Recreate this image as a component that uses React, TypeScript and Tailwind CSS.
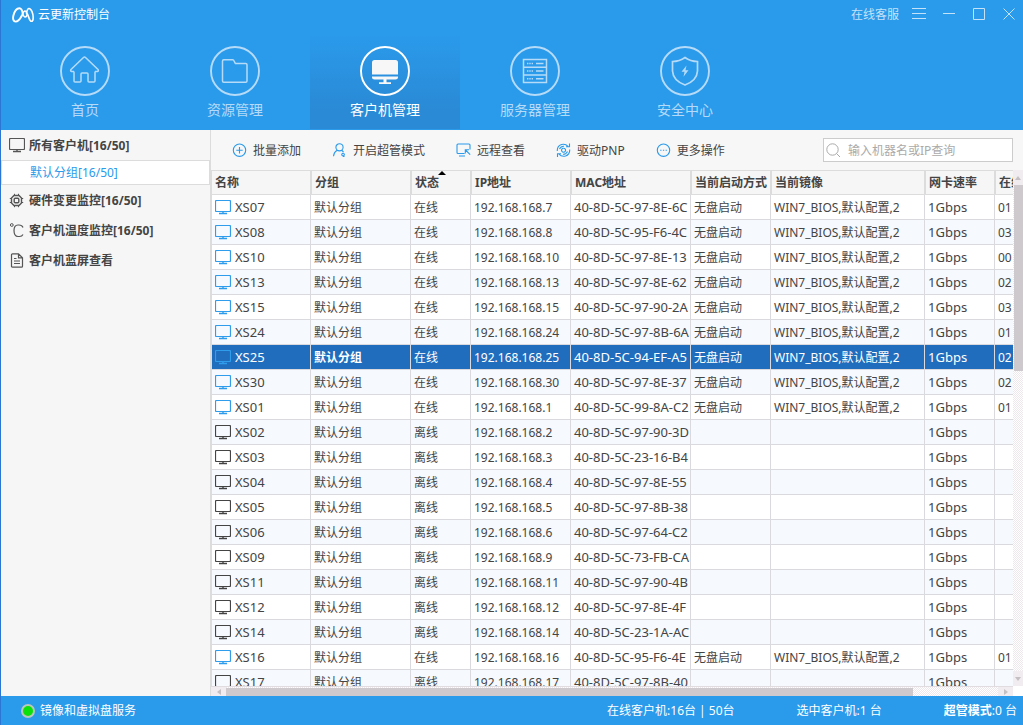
import { useState } from 'react';
import type { ReactNode } from 'react';

interface Client {
  name: string;
  online: boolean;
  ip: string;
  mac: string;
  hours?: string;
}

const clients: Client[] = [
  { name: 'XS07', online: true, ip: '192.168.168.7', mac: '40-8D-5C-97-8E-6C', hours: '01' },
  { name: 'XS08', online: true, ip: '192.168.168.8', mac: '40-8D-5C-95-F6-4C', hours: '03' },
  { name: 'XS10', online: true, ip: '192.168.168.10', mac: '40-8D-5C-97-8E-13', hours: '00' },
  { name: 'XS13', online: true, ip: '192.168.168.13', mac: '40-8D-5C-97-8E-62', hours: '02' },
  { name: 'XS15', online: true, ip: '192.168.168.15', mac: '40-8D-5C-97-90-2A', hours: '03' },
  { name: 'XS24', online: true, ip: '192.168.168.24', mac: '40-8D-5C-97-8B-6A', hours: '01' },
  { name: 'XS25', online: true, ip: '192.168.168.25', mac: '40-8D-5C-94-EF-A5', hours: '02' },
  { name: 'XS30', online: true, ip: '192.168.168.30', mac: '40-8D-5C-97-8E-37', hours: '02' },
  { name: 'XS01', online: true, ip: '192.168.168.1', mac: '40-8D-5C-99-8A-C2', hours: '01' },
  { name: 'XS02', online: false, ip: '192.168.168.2', mac: '40-8D-5C-97-90-3D' },
  { name: 'XS03', online: false, ip: '192.168.168.3', mac: '40-8D-5C-23-16-B4' },
  { name: 'XS04', online: false, ip: '192.168.168.4', mac: '40-8D-5C-97-8E-55' },
  { name: 'XS05', online: false, ip: '192.168.168.5', mac: '40-8D-5C-97-8B-38' },
  { name: 'XS06', online: false, ip: '192.168.168.6', mac: '40-8D-5C-97-64-C2' },
  { name: 'XS09', online: false, ip: '192.168.168.9', mac: '40-8D-5C-73-FB-CA' },
  { name: 'XS11', online: false, ip: '192.168.168.11', mac: '40-8D-5C-97-90-4B' },
  { name: 'XS12', online: false, ip: '192.168.168.12', mac: '40-8D-5C-97-8E-4F' },
  { name: 'XS14', online: false, ip: '192.168.168.14', mac: '40-8D-5C-23-1A-AC' },
  { name: 'XS16', online: true, ip: '192.168.168.16', mac: '40-8D-5C-95-F6-4E', hours: '01' },
  { name: 'XS17', online: false, ip: '192.168.168.17', mac: '40-8D-5C-97-8B-40' },
];

const columns = [
  { title: '名称', width: 'w-[99px]' },
  { title: '分组', width: 'w-[100px]' },
  { title: '状态', width: 'w-[60px]', sorted: true },
  { title: 'IP地址', width: 'w-[100px]' },
  { title: 'MAC地址', width: 'w-[120px]' },
  { title: '当前启动方式', width: 'w-[80px]' },
  { title: '当前镜像', width: 'w-[154px]' },
  { title: '网卡速率', width: 'w-[70px]' },
  { title: '在线', width: 'w-[156px]' },
];

function Monitor({ className }: { className: string }) {
  return (
    <svg className={className} width="16" height="15" viewBox="0 0 16 15" fill="none" stroke="currentColor">
      <path d="M1.500.5h13q1 0 1 1v9q0 1-1 1h-13q-1 0-1-1v-9q0-1 1-1z" strokeWidth="1.200" />
      <path d="M8 11.500V13M4 13.500h8" strokeWidth="1.400" />
    </svg>
  );
}

function Logo() {
  return (
    <svg width="22" height="16" viewBox="0 0 22 16" fill="none" stroke="white" strokeLinecap="round">
      <path d="M10.800 7C10.400 3.600 9.400 1.200 7.400 1.200C4.800 1.200 2.400 4.600 1.400 8.600C.6 12 1.400 14.600 3.600 14.600C6 14.600 8 12.200 9.600 9" strokeWidth="1.900" />
      <path d="M9.600 9C11 5.600 11.600 4 13 4C14.800 4 15.600 7 14.600 9C13.600 10.600 11.600 10.400 10.800 7" strokeWidth="1.500" />
      <path d="M14.400 6C15 3.400 15.800 1.500 17 1.500C19.400 1.500 21.200 6.800 21.200 10.400C21.200 12.800 20.600 14.300 19.400 14.300C17.400 14.300 17 10 15.400 7" strokeWidth="1.600" />
    </svg>
  );
}

const navItems: { label: string; icon: ReactNode }[] = [
  {
    label: '首页',
    icon: <path d="M14 25.500V35q0 1 1 1h5q1 0 1-1v-7q0-1 1-1h5q1 0 1 1v7q0 1 1 1h5q1 0 1-1V25.500M14 25.500H11.500q-1.500-.5-.5-2L23.500 11.500q1-1 2 0L38 23.500q1 1.500-.5 2H35" />,
  },
  {
    label: '资源管理',
    icon: <path d="M12.500 34.500V15q0-1.200 1.200-1.200h9q1 0 1.300 1l1 2q.4.800 1.200.800h9.600q1.200 0 1.200 1.200V35q0 1.200-1.200 1.200H13.700q-1.200 0-1.200-1.200z" />,
  },
  {
    label: '客户机管理',
    icon: (
      <g stroke="none" fill="#f7f7f7">
        <path d="M12 28.500V16.500q0-2.500 2.500-2.500h21q2.500 0 2.500 2.500v12z" />
        <path d="M12 30.500h26v1q0 2-2.500 2h-21q-2.500 0-2.500-2zM23.500 33.500h3v3h-3zM19 36.200h12V38H19z" />
      </g>
    ),
  },
  {
    label: '服务器管理',
    icon: (
      <g>
        <path d="M13.500 13.500h23v23h-23zM13.500 21.200h23M13.500 28.900h23" />
        <path d="M17 17.400h6M17 25h6M17 32.700h6" strokeDasharray="1.400 0.900" />
        <path d="M26 17.400h7.500M26 25h7.500M26 32.700h7.500" />
      </g>
    ),
  },
  {
    label: '安全中心',
    icon: (
      <g>
        <path d="M25 11.500Q30.500 15.500 37.500 15.500V25Q37 34.500 25 39Q13 34.500 12.500 25V15.500Q19.500 15.500 25 11.500z" strokeWidth="1.700" />
        <path d="M26.500 19.500L21.500 25.800h3l-1 5L28.500 24.300h-3z" fill="currentColor" stroke="none" />
      </g>
    ),
  },
];

const tools: { label: string; icon: ReactNode }[] = [
  { label: '批量添加', icon: <path d="M7.500 1a6.200 6.200 0 1 0 0 12.400a6.200 6.200 0 1 0 0-12.400zM7.500 4v6.400M4.300 7.200h6.400" /> },
  {
    label: '开启超管模式',
    icon: <path d="M7.500.7a3.600 3.600 0 1 0 0 7.200a3.600 3.600 0 1 0 0-7.200zM5 7.200Q2 9 1.500 13.200M9.500 7l2 2M11 10.300a1.300 1.300 0 1 0 .1 0M11 13.500h1.500" />,
  },
  {
    label: '远程查看',
    icon: <path d="M8.500 10.500H2Q1 10.500 1 9.500V2Q1 1 2 1h11Q14 1 14 2v4.500M3 13h6M9.500 7l4.700 4.700M9.300 10.500V6.800H13" />,
  },
  {
    label: '驱动PNP',
    icon: <path d="M1.300 8Q1 3 5.500 1.500Q9.500.5 12 3.300M13.700 6.500Q14 11.500 9.500 13Q5.500 14 3 11.200M13.500.5v3.300h-3.500M1.500 14v-3.300H5M3.500 6Q5 3 8 3.200M11.500 8.500Q10 11.500 7 11.300M7.500 5.200a2 2 0 1 0 .1 0" />,
  },
  {
    label: '更多操作',
    icon: (
      <g>
        <circle cx="7.500" cy="7.200" r="6.200" />
        <path d="M4.200 7.200h1.300M6.900 7.200h1.300M9.600 7.200h1.300" />
      </g>
    ),
  },
];

const sideIcons = {
  chip: (
    <g>
      <path d="M5 2.500h5l2.500 2.500v5l-2.500 2.500h-5l-2.500-2.500v-5z" strokeWidth="1.400" />
      <rect x="5.200" y="5.200" width="4.600" height="4.600" rx="1" strokeWidth="1.400" />
      <path d="M5.500.8v1.500M9.500.8v1.500M5.500 12.700v1.500M9.500 12.700v1.500M.8 5.500h1.500M.8 9.500h1.500M12.700 5.500h1.500M12.700 9.500h1.500" />
    </g>
  ),
  celsius: (
    <g>
      <circle cx="2.800" cy="2" r="1.400" />
      <path d="M14 4.500Q13 2 10 2H9Q5 2 5 7.500Q5 13.500 9 13.500h1.500Q13 13.500 14 11.500" strokeWidth="1.200" />
    </g>
  ),
  file: (
    <g>
      <path d="M3.500.8h6l4 4v8.400q0 1-1 1h-9q-1 0-1-1V1.800q0-1 1-1zM9.500.8v4h4" strokeWidth="1.200" />
      <path d="M5 5.500h2.500M5 8h6M5 10.500h6" />
    </g>
  ),
};

function SideItem({ label, children }: { label: string; children: ReactNode }) {
  return (
    <button className="flex h-[30px] items-center gap-1 pt-px pl-2 text-left font-bold text-[#444]">
      {children}
      <span className="pt-px">{label}</span>
    </button>
  );
}

function SideIcon({ children }: { children: ReactNode }) {
  return (
    <svg width="16" height="15" viewBox="0 0 16 15" fill="none" stroke="#555">
      {children}
    </svg>
  );
}

function Header() {
  const [active, setActive] = useState('客户机管理');

  return (
    <header className="flex h-[130px] shrink-0 flex-col bg-[#2a9aeb]">
      <div className="flex h-[30px] items-center pr-[7px] pl-[11px] text-white">
        <Logo />
        <h1 className="ml-1 text-xs">云更新控制台</h1>
        <div className="ml-auto flex items-center gap-4 text-[#c4e2f9]">
          <a href="#service" className="mr-[-3px] text-xs">在线客服</a>
          <button aria-label="菜单">
            <svg width="14" height="14" viewBox="0 0 14 14" stroke="currentColor"><path d="M0 .5h14M0 5.500h14M0 10.500h14" /></svg>
          </button>
          <button aria-label="最小化">
            <svg width="14" height="14" viewBox="0 0 14 14" stroke="currentColor"><path d="M1 5.500h12" /></svg>
          </button>
          <button aria-label="最大化">
            <svg width="14" height="14" viewBox="0 0 14 14" fill="none" stroke="currentColor"><path d="M1.500 .5h11v11h-11z" /></svg>
          </button>
          <button aria-label="关闭">
            <svg width="14" height="14" viewBox="0 0 14 14" stroke="currentColor"><path d="M1.500 .5l11 11M12.500 .5l-11 11" /></svg>
          </button>
        </div>
      </div>
      <nav className="mt-1 flex pl-[9px]">
        {navItems.map((item) => (
          <button
            key={item.label}
            onClick={() => setActive(item.label)}
            className={
              item.label === active
                ? 'flex h-[95px] w-[150px] flex-col items-center bg-linear-to-b from-[#2a9aeb] to-[#2a8ad6] to-80% pt-3 text-white'
                : 'flex h-[95px] w-[150px] flex-col items-center pt-3 text-[#b5dbf8]'
            }
          >
            <svg width="50" height="50" viewBox="0 0 50 50" fill="none" stroke="currentColor" strokeWidth="1.500">
              <circle cx="25" cy="25" r="24" strokeWidth="1.900" />
              {item.icon}
            </svg>
            <span className="mt-1 text-sm">{item.label}</span>
          </button>
        ))}
      </nav>
    </header>
  );
}

function Sidebar() {
  return (
    <aside className="flex w-[210px] shrink-0 flex-col border-r border-[#dcdcdc] bg-[#f6f6f6]">
      <SideItem label="所有客户机[16/50]">
        <Monitor className="text-[#555]" />
      </SideItem>
      <button className="h-[25px] border border-[#dcdcdc] bg-white pl-7 text-left text-[#2a9aeb]">
        默认分组[16/50]
      </button>
      <SideItem label="硬件变更监控[16/50]"><SideIcon>{sideIcons.chip}</SideIcon></SideItem>
      <SideItem label="客户机温度监控[16/50]"><SideIcon>{sideIcons.celsius}</SideIcon></SideItem>
      <SideItem label="客户机蓝屏查看"><SideIcon>{sideIcons.file}</SideIcon></SideItem>
    </aside>
  );
}

function Toolbar() {
  return (
    <div className="flex h-10 shrink-0 items-center bg-[#f7f7f7] pr-[10px] pl-[21px]">
      <div className="flex gap-[31px]">
        {tools.map((tool) => (
          <button key={tool.label} className="flex items-center gap-[6px] whitespace-nowrap">
            <svg width="15" height="15" viewBox="0 0 15 15" fill="none" stroke="#2a9aeb" strokeWidth="1.100">
              {tool.icon}
            </svg>
            <span className="pt-[2px]">{tool.label}</span>
          </button>
        ))}
      </div>
      <label className="ml-auto flex h-6 w-[190px] items-center border border-[#ccc] bg-white pl-[2px]">
        <svg className="shrink-0" width="15" height="15" viewBox="0 0 15 15" fill="none" stroke="#aaa" aria-label="查询">
          <circle cx="6.500" cy="6.500" r="5.700" />
          <path d="M10.500 10.500l3.500 3.500" />
        </svg>
        <input className="ml-[7px] w-full min-w-0 pt-[2px] outline-none placeholder:text-[#aaa]" placeholder="输入机器名或IP查询" />
      </label>
    </div>
  );
}

function ClientTable() {
  const [selected, setSelected] = useState('XS25');

  return (
    <div className="min-w-0 flex-1 overflow-hidden border-l border-[#dcdcdc] bg-white">
      <table className="w-full min-w-[939px] table-fixed border-separate border-spacing-0 whitespace-nowrap">
        <thead>
          <tr className="h-[25px] bg-[#f6f6f6] text-left">
            {columns.map((col, i) => (
              <th
                key={col.title}
                className={`${col.width} ${i > 0 ? 'border-l' : ''} relative border-t border-r border-b border-[#dcdcdc] p-0 pl-[3px] font-bold`}
              >
                {col.title}
                {col.sorted && (
                  <svg className="absolute top-0 left-[26px]" width="8" height="4" viewBox="0 0 8 4">
                    <path d="M4 0l4 4H0z" fill="black" />
                  </svg>
                )}
              </th>
            ))}
          </tr>
        </thead>
        <tbody>
          {clients.map((client) => {
            const isSelected = client.name === selected;
            const base = 'border-r border-b border-[#d9d9de] p-0 pl-[3px]';
            const cell = `${base} pt-[2px]`;
            return (
              <tr
                key={client.name}
                onClick={() => setSelected(client.name)}
                className={isSelected ? 'h-[25px] bg-[#206dbe] text-white' : 'h-[25px] odd:bg-white even:bg-[#f6faff]'}
              >
                <td className={`${base} text-[13px]/4`}>
                  <div className="flex items-center gap-1">
                    <Monitor className={client.online ? 'text-[#2f9cec]' : 'text-[#444]'} />
                    {client.name}
                  </div>
                </td>
                <td className={isSelected ? `${cell} font-bold` : cell}>默认分组</td>
                <td className={cell}>{client.online ? '在线' : '离线'}</td>
                <td className={cell}>{client.ip}</td>
                <td className={`${base} text-[13px]/4`}>{client.mac}</td>
                <td className={cell}>{client.online && '无盘启动'}</td>
                <td className={cell}>{client.online && 'WIN7_BIOS,默认配置,2'}</td>
                <td className={`${base} text-[13px]/4`}>1Gbps</td>
                <td className={cell}>{client.hours}</td>
              </tr>
            );
          })}
        </tbody>
      </table>
    </div>
  );
}

function Arrow({ d }: { d: string }) {
  return (
    <svg className="shrink-0" width="6" height="6" viewBox="0 0 6 6">
      <path d={d} fill="#c3bfc2" />
    </svg>
  );
}

const track = 'bg-[repeating-conic-gradient(#eee8ec_0%_25%,#ffffff_0%_50%)] bg-[length:2px_2px]';

export default function App() {
  return (
    <div className="flex h-screen flex-col overflow-hidden border-l border-[#2b76d2] bg-white font-['Noto_Sans','Noto_Sans_CJK_SC',sans-serif] text-xs text-[#444]">
      <Header />
      <div className="flex min-h-0 flex-1">
        <Sidebar />
        <main className="flex min-w-0 flex-1 flex-col">
          <Toolbar />
          <div className="flex min-h-0 flex-1">
            <ClientTable />
            <div className={`flex w-[10px] shrink-0 flex-col ${track}`}>
              <div className="flex h-[15px] items-center justify-center bg-[#f0ecef]"><Arrow d="M3 1l3 4H0z" /></div>
              <div className="ml-px h-[36%] bg-[#cdc9cc]" />
              <div className="mt-auto flex h-[15px] items-center justify-center bg-[#f0ecef]"><Arrow d="M3 5l3-4H0z" /></div>
            </div>
          </div>
          <div className="flex h-[10px] shrink-0 pr-[10px]">
            <div className={`flex flex-1 border-t border-[#e0dcdf] ${track}`}>
              <div className="flex w-[15px] items-center justify-center bg-[#f0ecef]"><Arrow d="M1 3l4-3v6z" /></div>
              <div className="mt-px w-6/7 bg-[#cdc9cc]" />
              <div className="ml-auto flex w-[15px] items-center justify-center bg-[#f0ecef]"><Arrow d="M5 3l-4-3v6z" /></div>
            </div>
          </div>
        </main>
      </div>
      <footer className="flex h-[29px] shrink-0 items-center bg-[#2a9aeb] pr-[6px] pl-5 text-white">
        <span className="mr-[5px] size-[14px] rounded-full border-2 border-[#b9c9b9] bg-[#0be00b]" />
        <span className="pt-px">镜像和虚拟盘服务</span>
        <div className="ml-auto flex gap-[62px] pt-px">
          <span>在线客户机:16台 | 50台</span>
          <span>选中客户机:1 台</span>
          <span><b>超管模式</b>:0 台</span>
        </div>
      </footer>
    </div>
  );
}
